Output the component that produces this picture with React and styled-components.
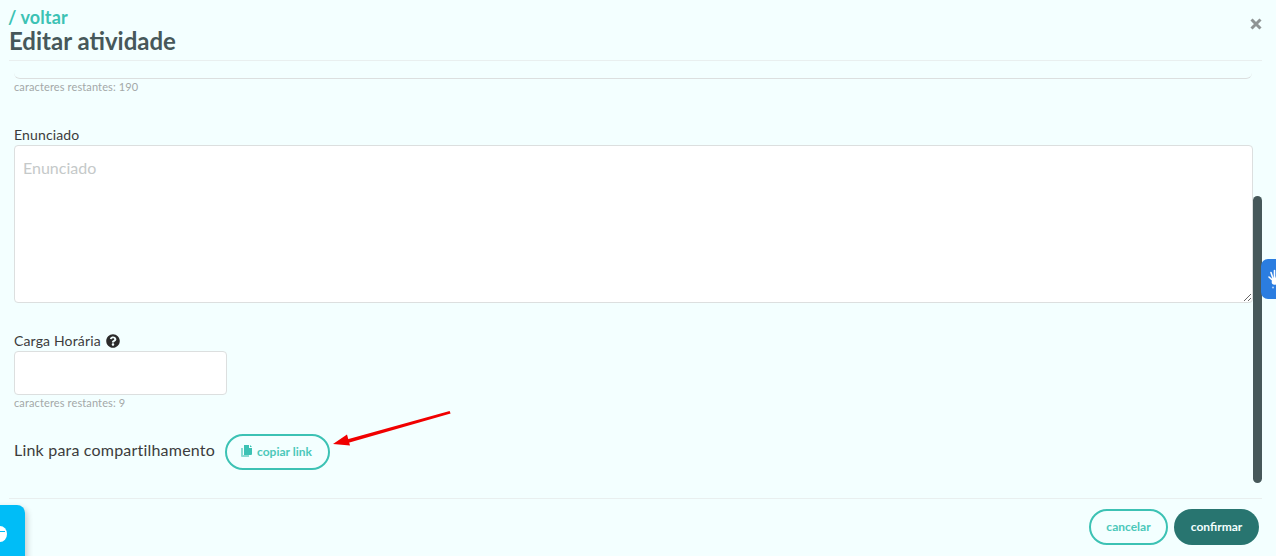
import React from 'react';
import styled, { createGlobalStyle } from 'styled-components';
import { FaQuestionCircle } from 'react-icons/fa';

const Global = createGlobalStyle`
  html, body { margin: 0; padding: 0; height: 100%; overflow: hidden; }
  body { background: #f3ffff; font-family: Lato, "Open Sans", sans-serif; color: #3a3a3a; }
  * { box-sizing: border-box; }
`;

const App = () => (
  <Modal>
    <Global />
    <Header>
      <Back>/ voltar</Back>
      <Title>Editar atividade</Title>
      <Close aria-label="fechar">
        <svg width="12" height="12" viewBox="0 0 12 12">
          <path d="M1.5 1.5l9 9M10.5 1.5l-9 9" stroke="#8f9494" strokeWidth="3" />
        </svg>
      </Close>
    </Header>
    <Body>
      <ClippedInput />
      <Helper>caracteres restantes: 190</Helper>
      <Label $top={32}>Enunciado</Label>
      <TextArea placeholder="Enunciado" />
      <Label $top={29}>
        Carga Horária <FaQuestionCircle size={14} color="#2b2b2b" />
      </Label>
      <ShortInput />
      <Helper>caracteres restantes: 9</Helper>
      <ShareRow>
        <ShareLabel>Link para compartilhamento</ShareLabel>
        <CopyButton>
          <svg width="11" height="12" viewBox="0 0 11 12">
            <path d="M0 3h2v7h6v2H1a1 1 0 0 1-1-1z" fill="#8adbd2" />
            <path d="M3 0h5v3h3v6a1 1 0 0 1-1 1H3z" fill="#3cc2b4" />
            <path d="M9 0l2 2H9z" fill="#3cc2b4" />
          </svg>
          copiar link
        </CopyButton>
      </ShareRow>
      <Arrow width="125" height="44" viewBox="0 0 125 44">
        <path d="M123.6 1L124.6 3.6L20 33.4L19 30Z" fill="#f00000" />
        <path d="M7 34L21 24.5L24 35.5Z" fill="#f00000" />
      </Arrow>
    </Body>
    <Footer>
      <CancelButton>cancelar</CancelButton>
      <ConfirmButton>confirmar</ConfirmButton>
    </Footer>
    <ScrollThumb />
    <AccessTab>
      <svg width="12" height="20" viewBox="0 0 12 20">
        <path
          d="M5.5 12L1 8M5.5 11L3 3.5M6.5 11V1.5M7.5 11.5L10 3M8 13l3.5-5"
          stroke="#fff"
          strokeWidth="1.6"
          strokeLinecap="round"
          fill="none"
        />
        <circle cx="6.5" cy="13" r="2.8" fill="#fff" />
        <circle cx="5" cy="18.5" r="1.1" fill="#a9cbf5" />
      </svg>
    </AccessTab>
    <ChatBubble>
      <ChatDot />
    </ChatBubble>
  </Modal>
);

export default App;

const Modal = styled.div`
  position: relative;
  display: flex;
  flex-direction: column;
  width: 1276px;
  height: 556px;
  overflow: hidden;
  background: #f3ffff;
`;

const Header = styled.header`
  position: relative;
  flex: none;
  height: 61px;
  margin: 0 14px 0 9px;
  padding-top: 7px;
  border-bottom: 1px solid #e9efef;
`;

const Back = styled.div`
  height: 20px;
  margin-left: -1px;
  font-size: 18px;
  line-height: 20px;
  font-weight: 700;
  letter-spacing: 0.1px;
  color: #3cc2b4;
`;

const Title = styled.h1`
  margin: 0;
  font-size: 24px;
  line-height: 28px;
  font-weight: 700;
  color: #46585a;
`;

const Close = styled.button`
  position: absolute;
  top: 18px;
  right: 0;
  display: flex;
  padding: 0;
  border: 0;
  background: none;
`;

const Body = styled.main`
  position: relative;
  flex: 1;
  padding: 0 24px 0 14px;
  overflow: hidden;
`;

const ClippedInput = styled.div`
  width: 1238px;
  height: 18px;
  border-bottom: 1px solid #dcdfdf;
  border-radius: 0 0 6px 6px;
`;

const Helper = styled.div`
  margin-top: 1px;
  font-size: 11px;
  line-height: 14px;
  letter-spacing: 0.12px;
  color: #a3a8a8;
`;

const Label = styled.label`
  display: flex;
  align-items: center;
  gap: 5px;
  margin-top: ${props => props.$top}px;
  height: 17px;
  font-size: 14px;
  line-height: 17px;
  letter-spacing: 0.15px;
  color: #3c3c3c;
`;

const TextArea = styled.textarea`
  display: block;
  width: 1239px;
  height: 158px;
  margin-top: 2px;
  padding: 12px 8px;
  border: 1px solid #dcdfdf;
  border-radius: 4px;
  background: #fff;
  font-family: inherit;
  font-size: 16px;
  line-height: 20px;
  outline: none;

  &::placeholder {
    color: #c5c9c9;
  }
`;

const ShortInput = styled.div`
  width: 213px;
  height: 44px;
  margin-top: 2px;
  border: 1px solid #dcdfdf;
  border-radius: 4px;
  background: #fff;
`;

const ShareRow = styled.div`
  display: flex;
  align-items: center;
  gap: 10px;
  margin-top: 24px;
`;

const ShareLabel = styled.span`
  width: 201px;
  padding-bottom: 6px;
  font-size: 16px;
  letter-spacing: 0.2px;
  color: #3c3c3c;
  white-space: nowrap;
`;

const CopyButton = styled.button`
  display: flex;
  align-items: center;
  justify-content: center;
  gap: 5px;
  width: 105px;
  height: 36px;
  padding: 0 2px 2px 0;
  border: 2px solid #3cc2b4;
  border-radius: 18px;
  background: none;
  font-family: inherit;
  font-size: 12px;
  font-weight: 700;
  color: #4bc8ba;
`;

const Arrow = styled.svg`
  position: absolute;
  left: 326px;
  top: 349px;
`;

const Footer = styled.footer`
  flex: none;
  display: flex;
  justify-content: flex-end;
  align-items: flex-start;
  gap: 6px;
  height: 58px;
  margin: 0 14px 0 9px;
  padding: 10px 3px 0 0;
  border-top: 1px solid #e9efef;
`;

const CancelButton = styled.button`
  width: 79px;
  height: 36px;
  padding: 0 0 2px;
  border: 2px solid #3cc2b4;
  border-radius: 18px;
  background: none;
  font-family: inherit;
  font-size: 12px;
  font-weight: 700;
  color: #4bc8ba;
`;

const ConfirmButton = styled.button`
  width: 85px;
  height: 36px;
  padding: 0 0 2px;
  border: 0;
  border-radius: 18px;
  background: #287570;
  font-family: inherit;
  font-size: 12px;
  font-weight: 700;
  color: #f3ffff;
`;

const ScrollThumb = styled.div`
  position: absolute;
  left: 1253px;
  top: 196px;
  width: 9px;
  height: 287px;
  border-radius: 5px;
  background: #46585a;
`;

const AccessTab = styled.div`
  position: absolute;
  left: 1261px;
  top: 259px;
  display: flex;
  align-items: center;
  width: 30px;
  height: 40px;
  padding-left: 7px;
  border-radius: 7px 0 0 7px;
  background: #2b7de0;
`;

const ChatBubble = styled.div`
  position: absolute;
  left: -30px;
  top: 505px;
  display: flex;
  align-items: center;
  justify-content: flex-end;
  width: 55px;
  height: 60px;
  padding-right: 18px;
  border-radius: 8px;
  background: #00bdf7;
  box-shadow: 2px 3px 6px rgba(0, 0, 0, 0.2);
`;

const ChatDot = styled.div`
  position: relative;
  width: 14px;
  height: 16px;
  margin-top: -3px;
  border-radius: 50%;
  background: #fff;

  &::after {
    content: '';
    position: absolute;
    left: 0;
    top: 5px;
    width: 12px;
    height: 1px;
    background: #00bdf7;
  }
`;
